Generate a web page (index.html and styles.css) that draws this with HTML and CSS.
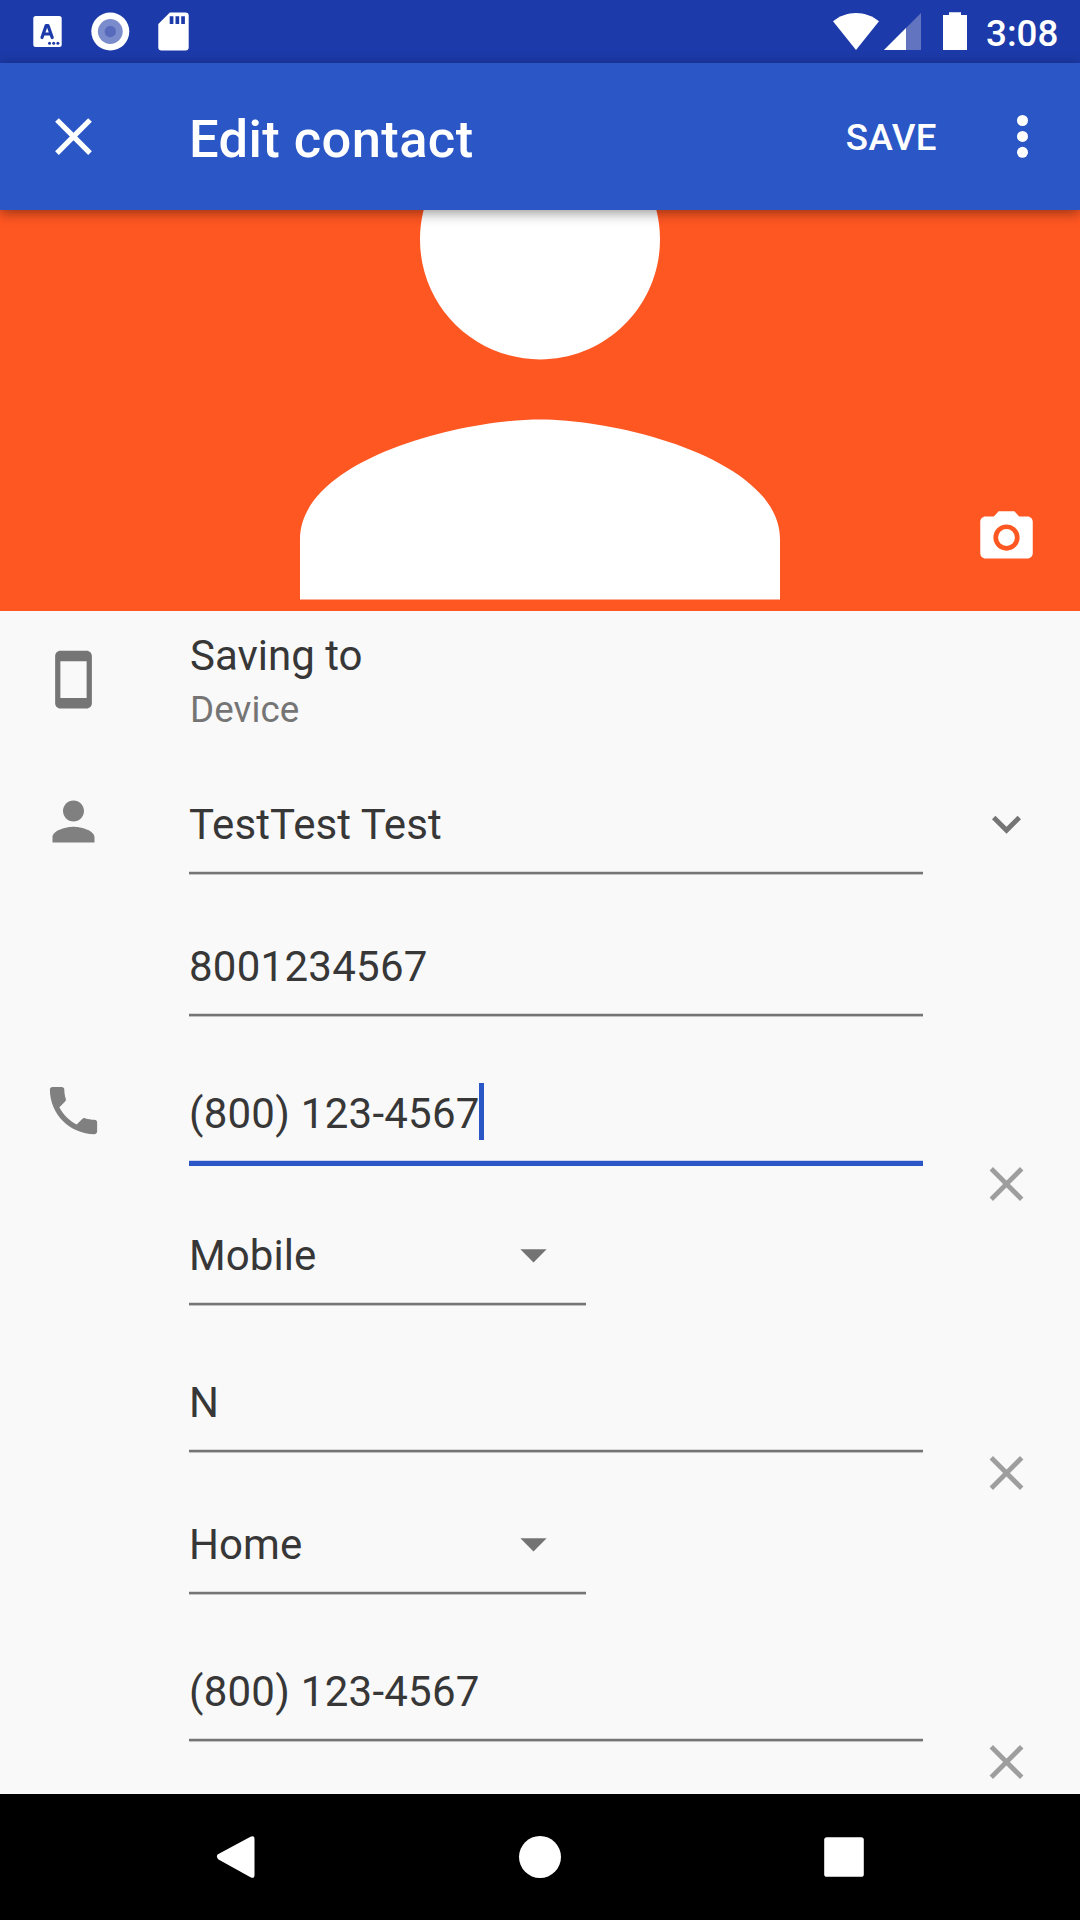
FILE: index.html
```html
<!DOCTYPE html>
<html lang="en">
<head>
<meta charset="utf-8">
<title>Edit contact</title>
<link rel="stylesheet" href="styles.css">
</head>
<body>
<div class="screen">
  <div class="status-bar">
    <svg class="status-left" width="200" height="63" viewBox="0 0 200 63">
      <rect x="33.3" y="16" width="28.4" height="31" rx="2.5" fill="#fff"/>
      <path d="M42 37.5L46.2 25.5h1.8L52.2 37.5M43.5 34h7" fill="none" stroke="#1c3aa9" stroke-width="3.2" stroke-linecap="round" stroke-linejoin="round"/>
      <g fill="#1c3aa9"><circle cx="49.5" cy="43.2" r="1.5"/><circle cx="53.7" cy="43.2" r="1.5"/><circle cx="57.9" cy="43.2" r="1.5"/></g>
      <circle cx="110.3" cy="31.5" r="19" fill="#fff"/>
      <circle cx="110.3" cy="31.5" r="12.4" fill="#7b8ccd"/>
      <circle cx="110.3" cy="31.5" r="5.7" fill="#576abb"/>
      <path d="M169.8 12.5h15.6q3.3 0 3.3 3.3v31.4q0 3.3-3.3 3.3h-23.8q-3.3 0-3.3-3.3V24z" fill="#fff"/>
      <path d="M169.7 16.3h3.7V24h-3.7zM175.5 16.3h3.7V24h-3.7zM181.2 16.3h3.7V24h-3.7z" fill="#1c3aa9"/>
    </svg>
    <svg class="status-right" width="140" height="63" viewBox="830 0 140 63">
      <path d="M856 50L833 21.3C839.5 16 847.5 13 856 13s16.5 3 23 8.3z" fill="#fff"/>
      <path d="M921 13v37h-37z" fill="#6274c0"/>
      <path d="M906 28v22h-22z" fill="#fff"/>
      <path d="M949 12.3h12V15h6v35h-24V15h6z" fill="#fff"/>
    </svg>
    <span class="clock">3:08</span>
  </div>

  <div class="app-bar">
    <svg class="icon" viewBox="0 0 24 24" fill="#fff"><path d="M19 6.41L17.59 5 12 10.59 6.41 5 5 6.41 10.59 12 5 17.59 6.41 19 12 13.41 17.59 19 19 17.59 13.41 12z"/></svg>
    <h1 class="title">Edit contact</h1>
    <span class="save">SAVE</span>
    <svg class="icon overflow" viewBox="0 0 63 63" fill="#fff"><circle cx="31.5" cy="15.5" r="5.5"/><circle cx="31.5" cy="31.4" r="5.5"/><circle cx="31.5" cy="47.3" r="5.5"/></svg>
  </div>

  <div class="photo">
    <svg class="avatar" viewBox="0 7.02 24 13.3667" fill="#fff"><path d="M12 12c2.21 0 4-1.79 4-4s-1.79-4-4-4-4 1.79-4 4 1.79 4 4 4zm0 2c-2.67 0-8 1.34-8 4v2h16v-2c0-2.66-5.33-4-8-4z"/></svg>
    <svg class="icon camera" viewBox="0 0 24 24" fill="#fff"><circle cx="12" cy="12" r="3.2"/><path d="M9 2L7.17 4H4c-1.1 0-2 .9-2 2v12c0 1.1.9 2 2 2h16c1.1 0 2-.9 2-2V6c0-1.1-.9-2-2-2h-3.17L15 2H9zm3 15c-2.76 0-5-2.24-5-5s2.24-5 5-5 5 2.24 5 5-2.24 5-5 5z"/></svg>
  </div>

  <div class="form">
    <div class="account">
      <svg class="icon" viewBox="0 0 24 24" fill="#757575"><path d="M17 1.01L7 1c-1.1 0-1.99.9-1.99 2v18c0 1.1.89 2 1.99 2h10c1.1 0 2-.9 2-2V3c0-1.1-.9-1.99-2-1.99zM17 19H7V5h10v14z"/></svg>
      <div class="account-text">
        <div class="account-title">Saving to</div>
        <div class="account-name">Device</div>
      </div>
    </div>

    <div class="entry">
      <svg class="icon kind" viewBox="0 0 24 24" fill="#808080"><path d="M12 12c2.21 0 4-1.79 4-4s-1.79-4-4-4-4 1.79-4 4 1.79 4 4 4zm0 2c-2.67 0-8 1.34-8 4v2h16v-2c0-2.66-5.33-4-8-4z"/></svg>
      <div class="fields">
        <div class="field">TestTest Test</div>
        <div class="field short digits">8001234567</div>
      </div>
      <svg class="action expand" viewBox="0 0 24 24" fill="#757575"><path d="M16.59 8.59L12 13.17 7.41 8.59 6 10l6 6 6-6z"/></svg>
    </div>

    <div class="entry">
      <svg class="icon kind phone" viewBox="0 0 24 24" fill="#808080"><path d="M6.62 10.79c1.44 2.83 3.76 5.14 6.59 6.59l2.2-2.2c.27-.27.67-.36 1.02-.24 1.12.37 2.33.57 3.57.57.55 0 1 .45 1 1V20c0 .55-.45 1-1 1-9.39 0-17-7.61-17-17 0-.55.45-1 1-1h3.5c.55 0 1 .45 1 1 0 1.25.2 2.45.57 3.57.11.35.03.74-.25 1.02l-2.2 2.2z"/></svg>
      <div class="fields">
        <div class="field digits focused">(800) 123-4567<span class="caret"></span></div>
        <div class="field short select">Mobile<svg class="icon arrow" viewBox="0 0 24 24" fill="#737373"><path d="M7 10l5 5 5-5z"/></svg></div>
      </div>
      <svg class="action" viewBox="0 0 24 24" fill="#9e9e9e"><path d="M19 6.41L17.59 5 12 10.59 6.41 5 5 6.41 10.59 12 5 17.59 6.41 19 12 13.41 17.59 19 19 17.59 13.41 12z"/></svg>
    </div>

    <div class="entry">
      <div class="fields">
        <div class="field">N</div>
        <div class="field short select">Home<svg class="icon arrow" viewBox="0 0 24 24" fill="#737373"><path d="M7 10l5 5 5-5z"/></svg></div>
      </div>
      <svg class="action" viewBox="0 0 24 24" fill="#9e9e9e"><path d="M19 6.41L17.59 5 12 10.59 6.41 5 5 6.41 10.59 12 5 17.59 6.41 19 12 13.41 17.59 19 19 17.59 13.41 12z"/></svg>
    </div>

    <div class="entry">
      <div class="fields">
        <div class="field digits">(800) 123-4567</div>
      </div>
      <svg class="action" viewBox="0 0 24 24" fill="#9e9e9e"><path d="M19 6.41L17.59 5 12 10.59 6.41 5 5 6.41 10.59 12 5 17.59 6.41 19 12 13.41 17.59 19 19 17.59 13.41 12z"/></svg>
    </div>
  </div>

  <div class="nav-bar">
    <svg width="42" height="42" viewBox="0 0 42 42" fill="#fff"><path d="M2.5 18.5L35.5 .7Q39.5-1 39.5 3V39Q39.5 43 35.5 41.3L3.5 23.5Q1 21 2.5 18.5z"/></svg>
    <svg width="42" height="42" viewBox="0 0 42 42" fill="#fff"><circle cx="21" cy="21" r="21"/></svg>
    <svg width="42" height="42" viewBox="0 0 42 42" fill="#fff"><rect x="1.2" y="1.2" width="39.6" height="39.6" rx="2.6"/></svg>
  </div>
</div>
</body>
</html>
```
FILE: styles.css
```css
* {
  box-sizing: border-box;
}

body {
  margin: 0;
  font-family: Roboto, "Liberation Sans", sans-serif;
  background: #f9f9f9;
}

svg {
  display: block;
  flex: none;
}

.screen {
  width: 1080px;
  height: 1920px;
  display: flex;
  flex-direction: column;
  overflow: hidden;
}

.status-bar {
  flex: none;
  height: 63px;
  background: #1c3aa9;
  display: flex;
  align-items: center;
  color: #fff;
}

.status-right {
  margin-left: auto;
}

.clock {
  width: 110px;
  padding-left: 16px;
  padding-top: 3px;
  font-size: 36.75px;
  line-height: 43px;
  font-weight: 500;
}

.app-bar {
  flex: none;
  height: 147px;
  padding: 0 26px 0 42px;
  background: #2a56c6;
  color: #fff;
  display: flex;
  align-items: center;
  box-shadow: 0 3px 12px rgba(0, 0, 0, 0.42);
  z-index: 1;
}

.icon {
  width: 63px;
  height: 63px;
}

.title {
  margin: 4px auto 0 84px;
  font-size: 52.5px;
  line-height: 62px;
  font-weight: 500;
  letter-spacing: 0.4px;
}

.save {
  margin: 2px 54px 0 0;
  font-size: 36.75px;
  line-height: 43px;
  font-weight: 500;
  letter-spacing: 0.4px;
}

.photo {
  flex: none;
  height: 401px;
  background: #ff5722;
  display: grid;
}

.photo > * {
  grid-area: 1 / 1;
}

.avatar {
  width: 720px;
  height: 401px;
  justify-self: center;
}

.camera {
  place-self: end;
  margin: 0 42px 42px 0;
}

.form {
  flex: 1;
  min-height: 0;
  overflow: hidden;
}

.account {
  height: 119px;
  padding: 20px 42px 0;
  display: flex;
  gap: 85px;
}

.account .icon {
  margin-top: 17px;
}

.account-title {
  font-size: 42px;
  line-height: 50px;
  color: #373737;
}

.account-name {
  margin-top: 7px;
  font-size: 36.75px;
  line-height: 43px;
  letter-spacing: 0.1px;
  color: #757575;
}

.entry {
  display: grid;
  grid-template-columns: 147px 734px 1fr;
  padding: 0 42px;
}

.kind {
  margin-top: 60px;
}

.fields {
  grid-column: 2;
}

.field {
  height: 147px;
  padding-bottom: 28px;
  display: flex;
  align-items: flex-end;
  font-size: 42px;
  line-height: 49px;
  letter-spacing: 0.08px;
  color: #373737;
  background: linear-gradient(#d9d9d9 1px, #757575 1px 3px, #c2c2c2 3px 4px, transparent 4px) bottom / 100% 6px no-repeat;
}

.field.digits {
  letter-spacing: 0.26px;
}

.field.short {
  height: 142px;
}

.field.select {
  width: 397px;
  justify-content: space-between;
}

.field.focused {
  background-image: linear-gradient(#ced7ef 1px, #2a56c6 1px);
}

.caret {
  width: 5px;
  height: 57px;
  margin: 0 0 -2px -1px;
  background: #2a56c6;
}

.arrow {
  margin: 0 21px -6px 0;
}

.action {
  grid-column: 3;
  width: 59px;
  height: 58px;
  margin: 136px 0 0 54px;
}

.action.expand {
  margin-top: 65px;
}

.nav-bar {
  flex: none;
  height: 126px;
  padding: 0 215px;
  background: #000;
  display: flex;
  align-items: center;
  justify-content: space-between;
}
```
